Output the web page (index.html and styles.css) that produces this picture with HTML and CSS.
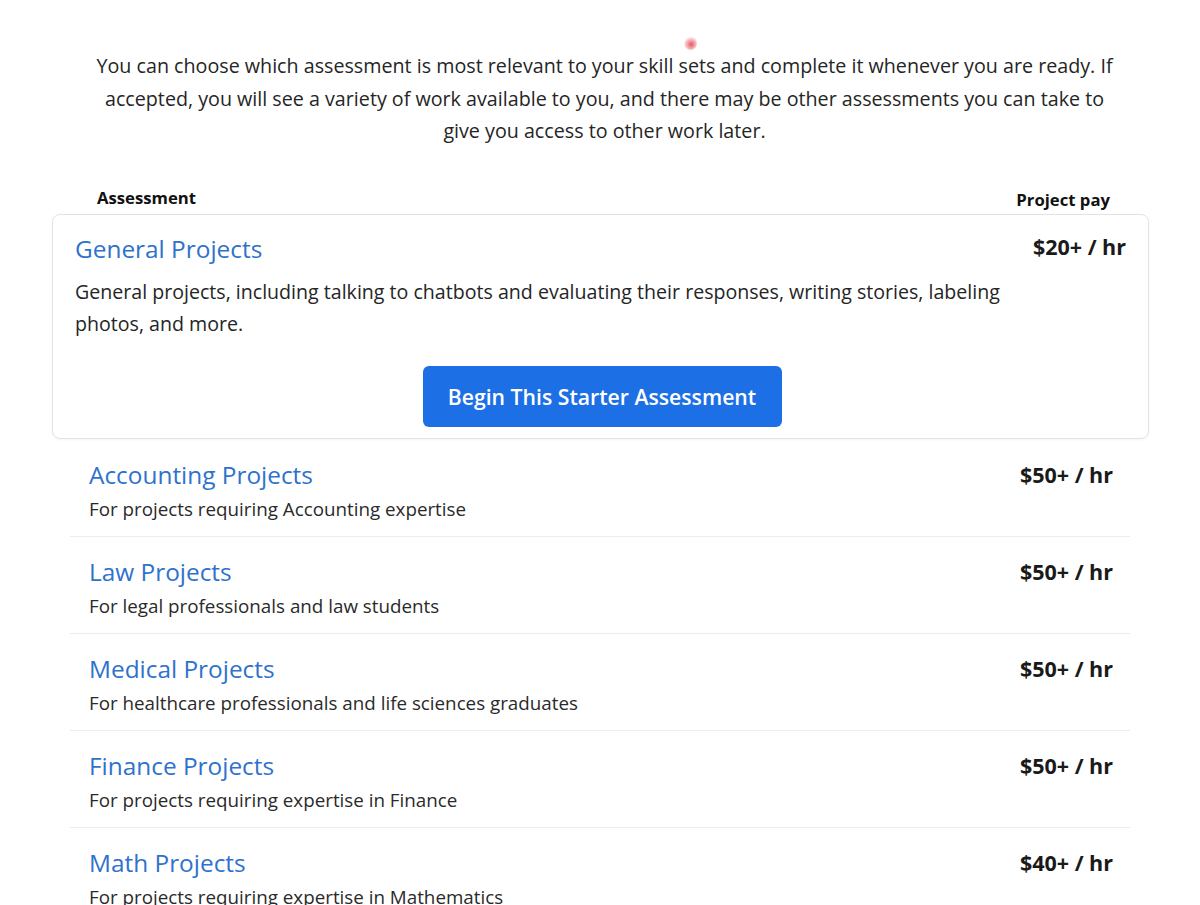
FILE: index.html
```html
<!DOCTYPE html>
<html lang="en">
<head>
<meta charset="utf-8">
<title>Assessments</title>
<link rel="stylesheet" href="styles.css">
</head>
<body>
<span class="cursor-mark" aria-hidden="true"></span>
<main class="page">
  <p class="intro">You can choose which assessment is most relevant to your skill sets and complete it whenever you are ready. If accepted, you will see a variety of work available to you, and there may be other assessments you can take to give you access to other work later.</p>

  <div class="table-head">
    <span class="th">Assessment</span>
    <span class="th th-pay">Project pay</span>
  </div>

  <section class="card">
    <div class="card-top">
      <div class="card-main">
        <a class="title" href="#">General Projects</a>
        <p class="card-desc">General projects, including talking to chatbots and evaluating their responses, writing stories, labeling photos, and more.</p>
      </div>
      <div class="price price-card">$20+ / hr</div>
    </div>
    <div class="btn-wrap">
      <button class="btn">Begin This Starter Assessment</button>
    </div>
  </section>

  <ul class="list">
    <li class="row">
      <div class="row-main">
        <a class="title" href="#">Accounting Projects</a>
        <p class="desc">For projects requiring Accounting expertise</p>
      </div>
      <div class="price">$50+ / hr</div>
    </li>
    <li class="row">
      <div class="row-main">
        <a class="title" href="#">Law Projects</a>
        <p class="desc">For legal professionals and law students</p>
      </div>
      <div class="price">$50+ / hr</div>
    </li>
    <li class="row">
      <div class="row-main">
        <a class="title" href="#">Medical Projects</a>
        <p class="desc">For healthcare professionals and life sciences graduates</p>
      </div>
      <div class="price">$50+ / hr</div>
    </li>
    <li class="row">
      <div class="row-main">
        <a class="title" href="#">Finance Projects</a>
        <p class="desc">For projects requiring expertise in Finance</p>
      </div>
      <div class="price">$50+ / hr</div>
    </li>
    <li class="row">
      <div class="row-main">
        <a class="title" href="#">Math Projects</a>
        <p class="desc">For projects requiring expertise in Mathematics</p>
      </div>
      <div class="price">$40+ / hr</div>
    </li>
  </ul>
</main>
</body>
</html>
```

FILE: styles.css
```css
* { box-sizing: border-box; }

html, body {
  margin: 0;
  padding: 0;
  background: #ffffff;
  overflow: hidden;
}

body {
  font-family: "Open Sans", "Noto Sans", "Liberation Sans", sans-serif;
  color: #222222;
  position: relative;
}

.cursor-mark {
  position: absolute;
  left: 684px;
  top: 36px;
  width: 13px;
  height: 14px;
  border-radius: 50%;
  background: radial-gradient(circle at 55% 60%, rgba(226, 60, 70, 0.85) 0, rgba(236, 110, 120, 0.55) 40%, rgba(255, 255, 255, 0) 72%);
}

.page {
  padding: 50px 51px 0 52px;
}

.intro {
  margin: 0 auto;
  padding-left: 8px;
  width: 1036px;
  text-align: center;
  font-size: 19.7px;
  line-height: 32.5px;
  color: #252525;
}

.table-head {
  display: flex;
  justify-content: space-between;
  align-items: flex-end;
  padding: 0 39px 0 45px;
  margin-top: 35px;
  height: 31px;
}

.th {
  font-weight: 700;
  font-size: 16.7px;
  line-height: 20px;
  color: #111111;
  position: relative;
  top: -6px;
}

.th-pay {
  top: -4px;
}

.card {
  border: 1px solid #e3e3e3;
  border-radius: 8px;
  padding: 17px 22px 11px 22px;
  box-shadow: 0 1px 3px rgba(0, 0, 0, 0.04);
}

.card-top {
  display: flex;
  gap: 24px;
}

.card-main {
  flex: 1;
}

.title {
  display: block;
  font-size: 24.4px;
  line-height: 34px;
  color: #2f72cc;
  text-decoration: none;
}

.card-desc {
  margin: 10px 0 0 0;
  font-size: 19.6px;
  line-height: 32px;
  color: #252525;
}

.price {
  font-weight: 700;
  font-size: 21.5px;
  line-height: 34px;
  color: #1a1a1a;
  white-space: nowrap;
}

.price-card {
  line-height: 30px;
}

.btn-wrap {
  display: flex;
  justify-content: center;
  margin-top: 26px;
  padding-left: 3px;
}

.btn {
  width: 359px;
  height: 61px;
  border: none;
  border-radius: 6px;
  background: #1d6fe5;
  color: #ffffff;
  font-family: "Open Sans", "Noto Sans", "Liberation Sans", sans-serif;
  font-weight: 600;
  font-size: 21.2px;
  cursor: pointer;
}

.list {
  list-style: none;
  margin: 19px 19px 0 18px;
  padding: 0;
}

.row {
  display: flex;
  justify-content: space-between;
  padding: 0 17px 12px 19px;
  border-bottom: 1px solid #ececec;
}

.row + .row {
  padding-top: 18px;
}

.row-main {
  flex: 1;
}

.desc {
  margin: 3px 0 0 0;
  font-size: 18.8px;
  line-height: 29px;
  color: #2a2a2a;
}
```
